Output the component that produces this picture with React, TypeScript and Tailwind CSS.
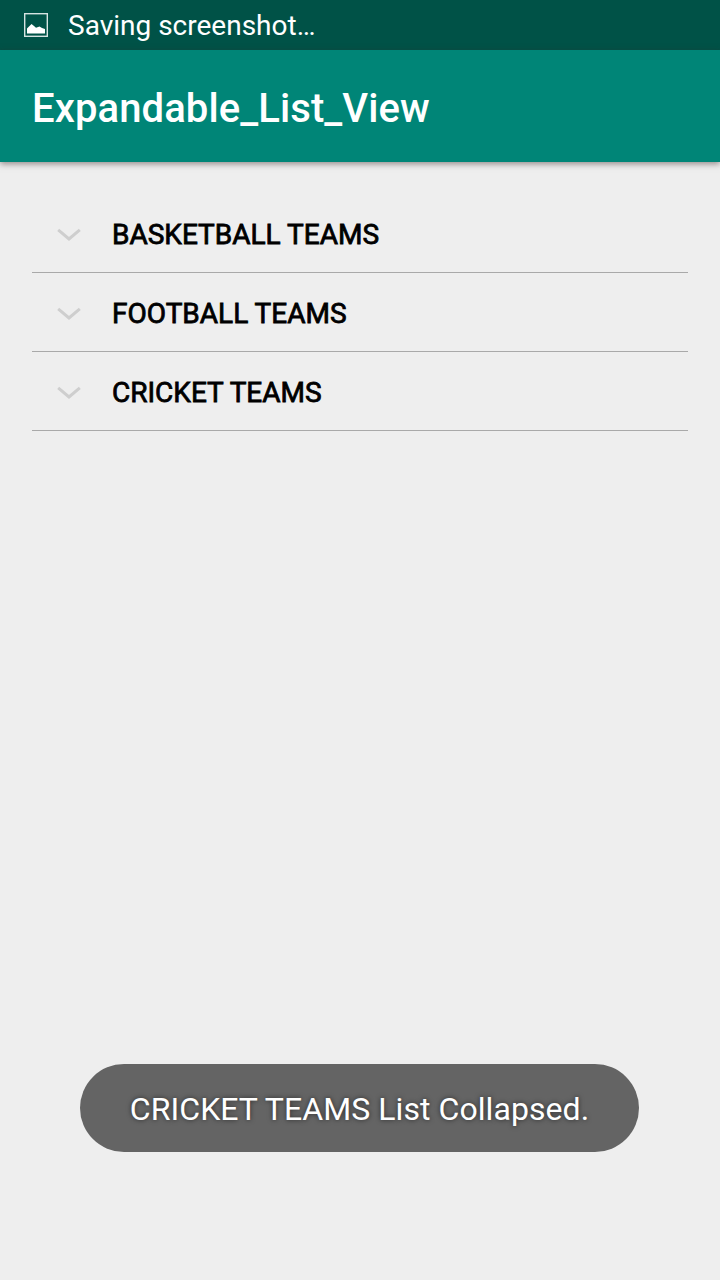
const groups = ["BASKETBALL TEAMS", "FOOTBALL TEAMS", "CRICKET TEAMS"];

function PictureIcon() {
  return (
    <svg width="24" height="24" viewBox="0 0 24 24" fill="none">
      <rect x="0.7" y="0.7" width="22.6" height="22.6" stroke="#d5e3e1" strokeWidth="1.4" />
      <path d="M3 20.5V15.5L5 13.5L7.5 11L10 13L12 14.8L15.5 13.5L18 15L21 16V20.5z" fill="white" />
    </svg>
  );
}

function Chevron() {
  return (
    <svg width="24" height="14" viewBox="0 0 24 14" fill="none">
      <path d="M1.2 1.8L12 11L22.8 1.8" stroke="#cecece" strokeWidth="3" />
    </svg>
  );
}

export default function App() {
  return (
    <div className="relative flex h-[1280px] w-[720px] flex-col overflow-hidden bg-[#eeeeee] font-['Roboto',sans-serif]">
      <div className="flex h-[50px] shrink-0 items-center gap-5 bg-[#005247] pl-6 text-white">
        <PictureIcon />
        <span className="pt-0.5 text-[28px] leading-[48px]">Saving screenshot…</span>
      </div>
      <header className="flex h-28 shrink-0 items-center bg-[#008577] pl-8 shadow-[0_2px_6px_rgba(60,40,40,0.5)]">
        <h1 className="pt-1.5 text-[40px] leading-none font-medium tracking-[0.1px] text-white">Expandable_List_View</h1>
      </header>
      <ul className="mx-8 mt-8">
        {groups.map((name) => (
          <li key={name} className="flex h-[79px] items-center border-b border-[#a9a9a9] pt-[3px] pl-[25px]">
            <Chevron />
            <span className="ml-[31px] text-[28px] leading-none text-black [-webkit-text-stroke:0.8px_black]">{name}</span>
          </li>
        ))}
      </ul>
      <div className="absolute top-[1064px] left-20 flex h-[88px] w-[559px] items-center justify-center rounded-full bg-[#646464]">
        <span className="pt-0.5 text-[32px] leading-none tracking-[0.07px] whitespace-nowrap text-white [text-shadow:0_0_5px_rgba(0,0,0,0.6)]">CRICKET TEAMS List Collapsed.</span>
      </div>
    </div>
  );
}
